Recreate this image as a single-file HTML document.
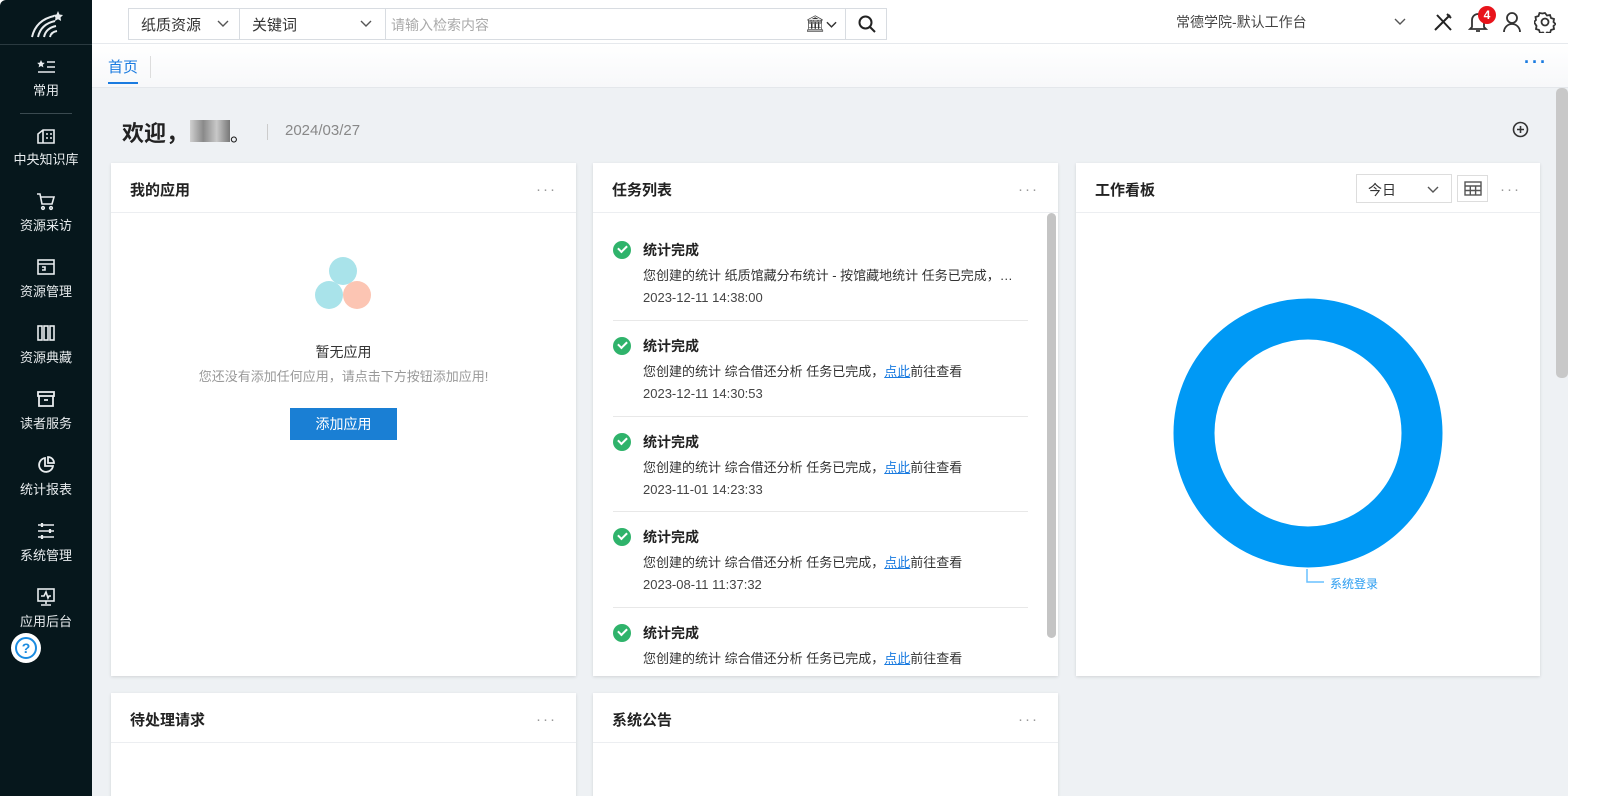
<!DOCTYPE html>
<html><head><meta charset="utf-8"><style>
*{box-sizing:border-box;margin:0;padding:0}
body{width:1599px;height:796px;overflow:hidden;background:#fff;font-family:"Liberation Sans","Noto Sans CJK SC",sans-serif;position:relative;color:#333}
.abs{position:absolute}
.side{left:0;top:0;width:92px;height:796px;background:#06171c;border-radius:6px 0 0 0}
.nav{position:absolute;left:0;width:92px;text-align:center;color:#e8ecee;font-size:13px}
.nav svg{display:block;margin:0 auto 4px}
.top{left:92px;top:0;width:1476px;height:44px;background:#fff;border-bottom:1px solid #e6e9ed}
.tabs{left:92px;top:44px;width:1476px;height:44px;background:linear-gradient(#fff,#f7f8fa);border-bottom:1px solid #e4e7eb}
.main{left:92px;top:88px;width:1476px;height:708px;background:#eef1f4;overflow:hidden}
.card{position:absolute;background:#fff;box-shadow:0 1px 3px rgba(0,0,0,.12)}
.card h3{position:absolute;left:19px;top:16px;font-size:15px;font-weight:bold;color:#222}
.card .hd{position:absolute;left:0;right:0;top:49px;border-top:1px solid #eceef1}
.dots{position:absolute;top:18px;font-size:15px;color:#999;letter-spacing:2px}
.task{position:absolute;left:20px;width:416px}
.task .t{position:absolute;left:30px;top:0;font-size:14px;font-weight:bold;color:#222}
.task .d{position:absolute;left:30px;top:25px;font-size:13px;color:#333;white-space:nowrap}
.task .time{position:absolute;left:30px;top:50px;font-size:13px;color:#444}
.task .ck{position:absolute;left:0;top:1px;width:18px;height:18px;border-radius:50%;background:#2fb36b}
.task .ck:after{content:"";position:absolute;left:5px;top:4px;width:7px;height:4px;border-left:2px solid #fff;border-bottom:2px solid #fff;transform:rotate(-45deg)}
a{color:#1a7be0;text-decoration:underline}
.chev{position:absolute}
</style></head><body>
<div class="abs side">
 <svg class="abs" style="left:28px;top:10px" width="38" height="28" viewBox="0 0 38 28"><g fill="none" stroke="#e8ecee" stroke-width="2"><path d="M4 27 Q8 10 26 6"/><path d="M10 27 Q13 14 27 11"/><path d="M16 27 Q18 18 28 16"/><path d="M22 27 Q23 22 29 21"/></g><path d="M30 1l1.5 3.5 3.5.5-2.5 2.5.6 3.5-3.1-1.7-3.1 1.7.6-3.5-2.5-2.5 3.5-.5z" fill="#e8ecee"/></svg>
 <div class="abs" style="left:0;top:44px;width:92px;border-top:1px solid #2a3a40"></div>
 <div class="nav" style="top:58px"><svg width="20" height="18" viewBox="0 0 20 18" fill="none" stroke="#e8ecee" stroke-width="1.6"><path d="M5 2l1.2 2.6 2.6.3-2 1.8.6 2.7L5 8 2.6 9.4l.6-2.7-2-1.8 2.6-.3z" fill="#e8ecee" stroke="none"/><path d="M11 4h8M11 9h8M2 14h17"/></svg>常用</div>
 <div class="abs" style="left:20px;top:113px;width:52px;border-top:1px solid #3a4a50"></div>
 <div class="nav" style="top:125px"><svg width="20" height="20" viewBox="0 0 20 20" fill="none" stroke="#e8ecee" stroke-width="1.6"><path d="M2 18V9l5-4h11v13zM7 5v13M10 9h2M14 9h2M10 13h2M14 13h2"/></svg>中央知识库</div>
 <div class="nav" style="top:191px"><svg width="20" height="20" viewBox="0 0 20 20" fill="none" stroke="#e8ecee" stroke-width="1.6"><path d="M1 3h3l2 10h10l2-7H5"/><circle cx="7" cy="17" r="1.3"/><circle cx="15" cy="17" r="1.3"/></svg>资源采访</div>
 <div class="nav" style="top:257px"><svg width="20" height="20" viewBox="0 0 20 20" fill="none" stroke="#e8ecee" stroke-width="1.6"><rect x="2" y="3" width="16" height="14"/><path d="M2 7h16M6 10h3v3H6"/></svg>资源管理</div>
 <div class="nav" style="top:323px"><svg width="20" height="20" viewBox="0 0 20 20" fill="none" stroke="#e8ecee" stroke-width="1.6"><rect x="2" y="3" width="4" height="14"/><rect x="8" y="3" width="4" height="14"/><rect x="14" y="3" width="4" height="14"/></svg>资源典藏</div>
 <div class="nav" style="top:389px"><svg width="20" height="20" viewBox="0 0 20 20" fill="none" stroke="#e8ecee" stroke-width="1.8"><rect x="2" y="3" width="16" height="4"/><path d="M3 7v10h14V7M8 11h4"/></svg>读者服务</div>
 <div class="nav" style="top:455px"><svg width="20" height="20" viewBox="0 0 20 20" fill="none" stroke="#e8ecee" stroke-width="1.8"><path d="M9 3a7 7 0 1 0 8 8H9z"/><path d="M12 2v6h6a6 6 0 0 0-6-6z"/></svg>统计报表</div>
 <div class="nav" style="top:521px"><svg width="20" height="20" viewBox="0 0 20 20" fill="none" stroke="#e8ecee" stroke-width="1.6"><path d="M2 4h16M2 10h16M2 16h16"/><path d="M6 2v4M14 8v4M6 14v4" stroke-width="2.2"/></svg>系统管理</div>
 <div class="nav" style="top:587px"><svg width="20" height="20" viewBox="0 0 20 20" fill="none" stroke="#e8ecee" stroke-width="1.6"><rect x="2" y="2" width="16" height="12"/><path d="M5 9h3l2-4 2 6 1-2h2M10 14v3M5 18h10"/></svg>应用后台</div>
 <div class="abs" style="left:11px;top:633px;width:30px;height:30px;border-radius:50%;background:#fff;color:#1a8be0;text-align:center"><div style="margin:4px auto;width:22px;height:22px;border:2px solid #1a8be0;border-radius:50%;font-size:14px;font-weight:bold;line-height:18px">?</div></div>
</div>

<div class="abs top">
 <div class="abs" style="left:36px;top:8px;width:759px;height:32px;border:1px solid #d8dce1;font-size:15px;color:#333">
  <div class="abs" style="left:0;top:0;width:111px;height:30px;border-right:1px solid #d8dce1;padding:5px 12px">纸质资源<svg class="chev" style="left:88px;top:11px" width="12" height="8" viewBox="0 0 12 8" fill="none" stroke="#555" stroke-width="1.4"><path d="M1 1l5 5 5-5"/></svg></div>
  <div class="abs" style="left:111px;top:0;width:146px;height:30px;border-right:1px solid #d8dce1;padding:5px 12px">关键词<svg class="chev" style="left:120px;top:11px" width="12" height="8" viewBox="0 0 12 8" fill="none" stroke="#555" stroke-width="1.4"><path d="M1 1l5 5 5-5"/></svg></div>
  <div class="abs" style="left:262px;top:6px;color:#aaa;font-size:14px">请输入检索内容</div>
  <div class="abs" style="left:676px;top:5px;font-size:16px;color:#333">🏛</div>
  <svg class="chev" style="left:697px;top:12px" width="11" height="8" viewBox="0 0 12 8" fill="none" stroke="#333" stroke-width="1.6"><path d="M1 1l5 5 5-5"/></svg>
  <div class="abs" style="left:716px;top:0;width:42px;height:30px;border-left:1px solid #d8dce1"><svg style="margin:6px 12px" width="18" height="18" viewBox="0 0 18 18" fill="none" stroke="#222" stroke-width="2"><circle cx="7.5" cy="7.5" r="6"/><path d="M12 12l5 5"/></svg></div>
 </div>
 <div class="abs" style="left:1084px;top:12px;font-size:14px;color:#444">常德学院-默认工作台</div>
 <svg class="chev" style="left:1302px;top:18px" width="12" height="8" viewBox="0 0 12 8" fill="none" stroke="#555" stroke-width="1.4"><path d="M1 1l5 5 5-5"/></svg>
 <svg class="abs" style="left:1341px;top:12px" width="20" height="20" viewBox="0 0 20 20" fill="none" stroke="#222" stroke-width="2"><path d="M2 18L17 3M4 3l14 15M14 2l4 4"/></svg>
 <svg class="abs" style="left:1376px;top:11px" width="20" height="22" viewBox="0 0 20 22" fill="none" stroke="#333" stroke-width="1.8"><path d="M4 16V9a6 6 0 0 1 12 0v7l2 2H2zM8 20h4"/></svg>
 <div class="abs" style="left:1386px;top:6px;width:18px;height:18px;border-radius:50%;background:#e8141b;color:#fff;font-size:12px;font-weight:bold;text-align:center;line-height:18px">4</div>
 <svg class="abs" style="left:1410px;top:11px" width="20" height="22" viewBox="0 0 20 22" fill="none" stroke="#333" stroke-width="1.8"><circle cx="10" cy="7" r="5"/><path d="M2 21a8 8 0 0 1 16 0"/></svg>
 <svg class="abs" style="left:1442px;top:11px" width="22" height="22" viewBox="0 0 22 22" fill="none" stroke="#333" stroke-width="1.8"><path d="M11 2l2 2.5 3-.5 1 3 3 1-.5 3 2 2-2 2 .5 3-3 1-1 3-3-.5-2 2.5-2-2.5-3 .5-1-3-3-1 .5-3L0 11l2-2-.5-3 3-1 1-3 3 .5z"/><circle cx="11" cy="11" r="3.5"/></svg>
</div>
<div class="abs tabs">
 <div class="abs" style="left:16px;top:12px;font-size:15px;color:#1a7be0">首页</div>
 <div class="abs" style="left:16px;top:38px;width:30px;height:2px;background:#1a7be0"></div>
 <div class="abs" style="left:58px;top:12px;height:22px;border-left:1px solid #ddd"></div>
 <div class="abs" style="left:1432px;top:8px;color:#1a7be0;font-size:18px;letter-spacing:2px;font-weight:bold">···</div>
</div>
<div class="abs main">
 <div class="abs" style="left:30px;top:28px;font-size:22px;font-weight:bold;color:#222">欢迎，</div>
 <div class="abs" style="left:98px;top:32px;width:40px;height:22px;background:linear-gradient(90deg,#d0d0d0,#8a8a8a,#c8c8c8,#777)"></div>
 <div class="abs" style="left:138px;top:30px;font-size:20px;color:#222">。</div>
 <div class="abs" style="left:175px;top:36px;height:16px;border-left:1px solid #ccc"></div>
 <div class="abs" style="left:193px;top:34px;font-size:15px;color:#888">2024/03/27</div>
 <svg class="abs" style="left:1420px;top:33px" width="17" height="17" viewBox="0 0 17 17" fill="none" stroke="#333" stroke-width="1.6"><circle cx="8.5" cy="8.5" r="7"/><path d="M8.5 5v7M5 8.5h7"/></svg>

 <div class="card" style="left:19px;top:75px;width:465px;height:513px">
  <h3>我的应用</h3><div class="dots" style="right:19px">···</div><div class="hd"></div>
  <div class="abs" style="left:218px;top:94px;width:28px;height:28px;border-radius:50%;background:#a9e3ea"></div>
  <div class="abs" style="left:204px;top:118px;width:28px;height:28px;border-radius:50%;background:#a9e3ea"></div>
  <div class="abs" style="left:232px;top:118px;width:28px;height:28px;border-radius:50%;background:#fcc5b3"></div>
  <div class="abs" style="left:0;width:100%;top:179px;text-align:center;font-size:14px;color:#333">暂无应用</div>
  <div class="abs" style="left:0;width:100%;top:203px;text-align:center;font-size:13px;color:#999">您还没有添加任何应用，请点击下方按钮添加应用!</div>
  <div class="abs" style="left:179px;top:245px;width:107px;height:32px;background:#1a7fd4;color:#fff;text-align:center;line-height:32px;font-size:14px">添加应用</div>
 </div>
 <div class="card" style="left:501px;top:75px;width:465px;height:513px;overflow:hidden">
  <h3>任务列表</h3><div class="dots" style="right:19px">···</div><div class="hd"></div>
  <div class="abs" style="left:454px;top:50px;width:9px;height:425px;background:#c4c4c4;border-radius:5px"></div>
  <div class="task" style="top:77px;"><div class="ck"></div><div class="t">统计完成</div><div class="d">您创建的统计 纸质馆藏分布统计 - 按馆藏地统计 任务已完成，…</div><div class="time">2023-12-11 14:38:00</div></div>
  <div class="abs" style="left:20px;top:157px;width:415px;border-top:1px solid #e8e8e8"></div>
  <div class="task" style="top:173px;"><div class="ck"></div><div class="t">统计完成</div><div class="d">您创建的统计 综合借还分析 任务已完成，<a>点此</a>前往查看</div><div class="time">2023-12-11 14:30:53</div></div>
  <div class="abs" style="left:20px;top:253px;width:415px;border-top:1px solid #e8e8e8"></div>
  <div class="task" style="top:269px;"><div class="ck"></div><div class="t">统计完成</div><div class="d">您创建的统计 综合借还分析 任务已完成，<a>点此</a>前往查看</div><div class="time">2023-11-01 14:23:33</div></div>
  <div class="abs" style="left:20px;top:348px;width:415px;border-top:1px solid #e8e8e8"></div>
  <div class="task" style="top:364px;"><div class="ck"></div><div class="t">统计完成</div><div class="d">您创建的统计 综合借还分析 任务已完成，<a>点此</a>前往查看</div><div class="time">2023-08-11 11:37:32</div></div>
  <div class="abs" style="left:20px;top:444px;width:415px;border-top:1px solid #e8e8e8"></div>
  <div class="task" style="top:460px;"><div class="ck"></div><div class="t">统计完成</div><div class="d">您创建的统计 综合借还分析 任务已完成，<a>点此</a>前往查看</div></div>
 </div>
 <div class="card" style="left:984px;top:75px;width:464px;height:513px">
  <h3>工作看板</h3><div class="dots" style="right:19px">···</div><div class="hd"></div>
  <div class="abs" style="left:280px;top:11px;width:96px;height:29px;border:1px solid #ddd;font-size:14px;padding:5px 11px">今日<svg class="chev" style="left:70px;top:11px" width="12" height="8" viewBox="0 0 12 8" fill="none" stroke="#555" stroke-width="1.4"><path d="M1 1l5 5 5-5"/></svg></div>
  <div class="abs" style="left:381px;top:12px;width:31px;height:27px;border:1px solid #ddd"><svg style="margin:5px 6px" width="18" height="15" viewBox="0 0 18 15" fill="none" stroke="#555" stroke-width="1.4"><rect x="1" y="1" width="16" height="13"/><path d="M1 5h16M1 9.5h16M6.3 5v9M11.6 5v9"/></svg></div>
  <svg class="abs" style="left:96px;top:134px" width="280" height="280" viewBox="0 0 280 280"><circle cx="136" cy="136" r="114" fill="none" stroke="#0099f5" stroke-width="41"/></svg>
  <svg class="abs" style="left:228px;top:406px" width="30" height="20"><path d="M3 0V13H20" fill="none" stroke="#69c0ff" stroke-width="1.5"/></svg>
  <div class="abs" style="left:254px;top:412px;font-size:12px;color:#2a9cf0">系统登录</div>
 </div>
 <div class="card" style="left:19px;top:605px;width:465px;height:120px"><h3>待处理请求</h3><div class="dots" style="right:19px">···</div><div class="hd"></div></div>
 <div class="card" style="left:501px;top:605px;width:465px;height:120px"><h3>系统公告</h3><div class="dots" style="right:19px">···</div><div class="hd"></div></div>
 <div class="abs" style="left:1464px;top:0;width:12px;height:290px;background:#c8c8c8;border-radius:5px"></div>
</div>
</body></html>
